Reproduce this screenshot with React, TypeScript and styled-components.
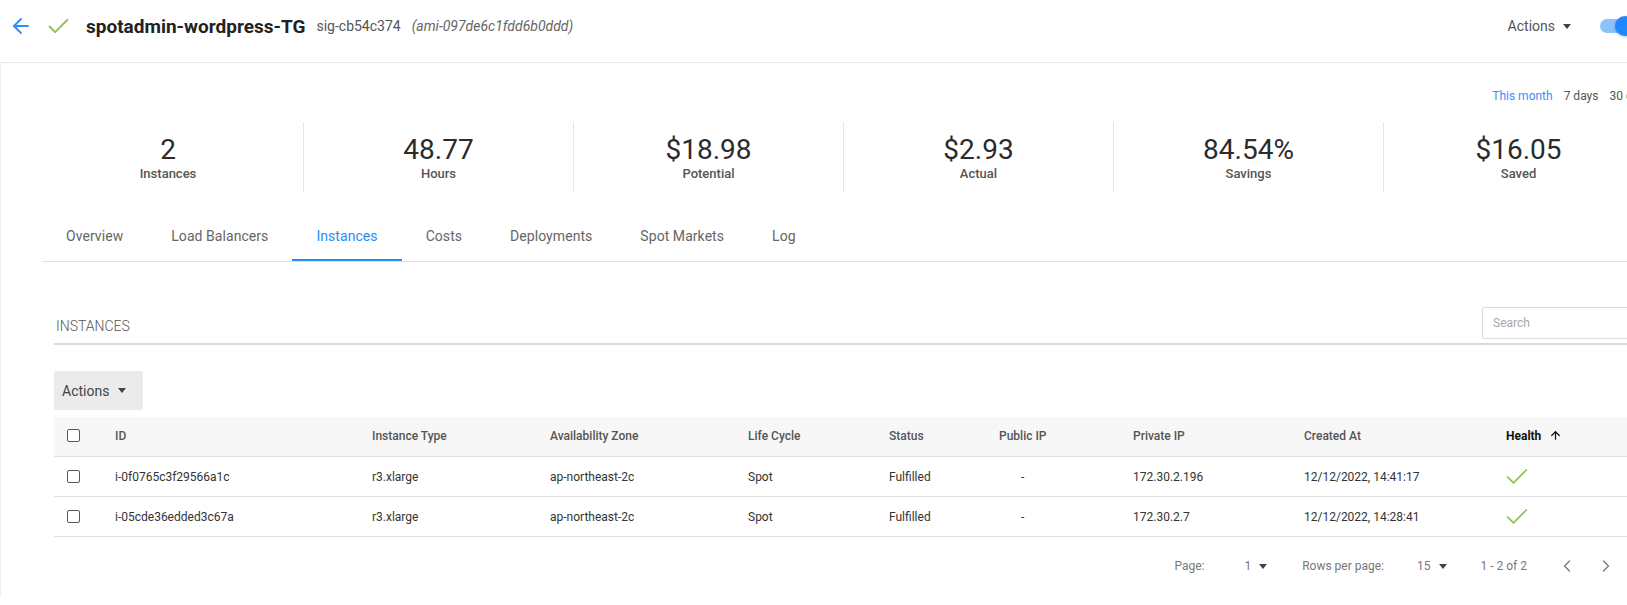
import React from 'react';
import styled, { createGlobalStyle } from 'styled-components';
import { ArrowLeft, ArrowUp, Check, ChevronLeft, ChevronRight } from 'lucide-react';

const GlobalStyle = createGlobalStyle`
  html, body {
    margin: 0;
    padding: 0;
    overflow: hidden;
    background: #fff;
  }
  body {
    font-family: Roboto, "Liberation Sans", Arial, sans-serif;
    color: #333;
  }
  * {
    box-sizing: border-box;
  }
`;

const Page = styled.div`
  width: 1700px;
`;

const Header = styled.header`
  display: flex;
  align-items: center;
  height: 63px;
  padding: 0 66px 10px 9px;
  border-bottom: 1px solid #e8e8e8;
`;

const BackButton = styled.span`
  display: flex;
  color: #2d8cff;
`;

const StatusIcon = styled.span`
  display: flex;
  margin-left: 12px;
  color: #8bc34a;
`;

const Title = styled.h1`
  margin: 0 0 0 14px;
  font-size: 19px;
  font-weight: 700;
  color: #222;
`;

const SubId = styled.span`
  margin-left: 11px;
  font-size: 14px;
  color: #555;
`;

const Ami = styled.span`
  margin-left: 11px;
  font-size: 14px;
  font-style: italic;
  color: #666;
`;

const HeaderRight = styled.div`
  margin-left: auto;
  display: flex;
  align-items: center;
`;

const MenuButton = styled.span`
  display: flex;
  align-items: center;
  font-size: 14px;
  color: #555;
`;

const Caret = styled.span<{ $gap?: number }>`
  display: inline-block;
  margin-left: ${(p) => p.$gap ?? 8}px;
  width: 0;
  height: 0;
  border-left: 4.5px solid transparent;
  border-right: 4.5px solid transparent;
  border-top: 5px solid #3d4451;
`;

const Toggle = styled.span`
  position: relative;
  display: inline-block;
  margin-left: 29px;
  width: 34px;
  height: 14px;
  border-radius: 7px;
  background: #8cc3fb;
`;

const ToggleThumb = styled.span`
  position: absolute;
  top: -3px;
  right: -1px;
  width: 20px;
  height: 20px;
  border-radius: 50%;
  background: #1e88ff;
  box-shadow: 0 1px 3px rgba(0, 0, 0, 0.25);
`;

const Body = styled.main`
  border-left: 1px solid #eeeeee;
`;

const RangeRow = styled.div`
  display: flex;
  justify-content: flex-end;
  gap: 11px;
  padding: 25px 49px 0 0;
  font-size: 12px;
  line-height: 16px;
`;

const RangeOption = styled.span<{ $active?: boolean }>`
  color: ${(p) => (p.$active ? '#3d8ef8' : '#555')};
`;

const StatsRow = styled.section`
  display: grid;
  grid-template-columns: repeat(6, 270px);
  margin: 18px 0 0 32px;
`;

const Stat = styled.div`
  display: flex;
  flex-direction: column;
  align-items: center;
  height: 70px;
  padding-top: 12px;
  & + & {
    border-left: 1px solid #e6e6e6;
  }
`;

const StatValue = styled.div`
  font-size: 28px;
  line-height: 32px;
  font-weight: 400;
  color: #2b2b2b;
`;

const StatLabel = styled.div`
  font-size: 13px;
  line-height: 16px;
  font-weight: 500;
  color: #555;
`;

const TabBar = styled.nav`
  display: flex;
  margin: 21px 0 0 41px;
  border-bottom: 1px solid #e0e0e0;
`;

const Tab = styled.span<{ $active?: boolean }>`
  display: flex;
  align-items: center;
  height: 48px;
  padding: 0 24px 1px;
  font-size: 14px;
  letter-spacing: 0.06px;
  color: ${(p) => (p.$active ? '#2b8cf8' : '#666')};
  border-bottom: 2px solid ${(p) => (p.$active ? '#2b8cf8' : 'transparent')};
`;

const Section = styled.section`
  margin: 41px 40px 0 53px;
`;

const SectionHeader = styled.div`
  display: flex;
  align-items: center;
  justify-content: space-between;
  padding: 4px 0;
  border-bottom: 2px solid #d9d9d9;
`;

const SectionTitle = styled.h2`
  margin: 0;
  padding: 5px 0 0 2px;
  font-size: 14px;
  font-weight: 300;
  color: #555;
  text-transform: uppercase;
`;

const SearchInput = styled.input`
  width: 178px;
  height: 32px;
  padding: 0 10px;
  border: 1px solid #dcdcdc;
  border-radius: 2px;
  font-family: Roboto, sans-serif;
  font-size: 12px;
  color: #333;
  &::placeholder {
    color: #a8a8a8;
  }
`;

const ActionsButton = styled.button`
  display: flex;
  align-items: center;
  margin-top: 26px;
  height: 39px;
  width: 89px;
  padding: 0 0 0 8px;
  border: none;
  border-radius: 2px;
  background: #ebebeb;
  font-family: Roboto, sans-serif;
  font-size: 14px;
  color: #444;
`;

const Table = styled.div`
  margin-top: 7px;
`;

const cols = '61px 257px 178px 198px 141px 110px 134px 171px 202px 1fr';

const HeadRow = styled.div`
  display: grid;
  grid-template-columns: ${cols};
  align-items: center;
  height: 40px;
  padding-bottom: 2px;
  background: #f7f7f7;
  border-bottom: 1px solid #e0e0e0;
  font-size: 12px;
  font-weight: 500;
  color: #555;
`;

const Row = styled.div`
  display: grid;
  grid-template-columns: ${cols};
  align-items: center;
  height: 40px;
  border-bottom: 1px solid #e0e0e0;
  font-size: 12px;
  color: #333;
`;

const Cell = styled.div<{ $indent?: number }>`
  padding-left: ${(p) => p.$indent ?? 0}px;
  display: flex;
  align-items: center;
`;

const SortHead = styled.div`
  display: flex;
  align-items: center;
  gap: 8px;
  font-weight: 700;
  color: #111;
`;

const Box = styled.span`
  display: inline-block;
  margin-left: 13px;
  width: 13px;
  height: 13px;
  border: 1.5px solid #5a5a5a;
  border-radius: 2px;
  background: #fff;
`;

const HealthIcon = styled.span`
  display: flex;
  margin-left: -3px;
  color: #8bc34a;
`;

const Pagination = styled.div`
  display: flex;
  align-items: center;
  justify-content: flex-end;
  height: 58px;
  padding-right: 44px;
  font-size: 12px;
  color: #777;
`;

const PagerItem = styled.span<{ $gap: number }>`
  display: flex;
  align-items: center;
  margin-left: ${(p) => p.$gap}px;
`;

const PagerArrow = styled.span<{ $gap: number }>`
  display: flex;
  margin-left: ${(p) => p.$gap}px;
  color: #777;
`;

const stats = [
  { value: '2', label: 'Instances' },
  { value: '48.77', label: 'Hours' },
  { value: '$18.98', label: 'Potential' },
  { value: '$2.93', label: 'Actual' },
  { value: '84.54%', label: 'Savings' },
  { value: '$16.05', label: 'Saved' },
];

const tabs = ['Overview', 'Load Balancers', 'Instances', 'Costs', 'Deployments', 'Spot Markets', 'Log'];

const instances = [
  {
    id: 'i-0f0765c3f29566a1c',
    type: 'r3.xlarge',
    zone: 'ap-northeast-2c',
    lifeCycle: 'Spot',
    status: 'Fulfilled',
    publicIp: '-',
    privateIp: '172.30.2.196',
    createdAt: '12/12/2022, 14:41:17',
  },
  {
    id: 'i-05cde36edded3c67a',
    type: 'r3.xlarge',
    zone: 'ap-northeast-2c',
    lifeCycle: 'Spot',
    status: 'Fulfilled',
    publicIp: '-',
    privateIp: '172.30.2.7',
    createdAt: '12/12/2022, 14:28:41',
  },
];

const App: React.FC = () => {
  return (
    <Page>
      <GlobalStyle />
      <Header>
        <BackButton>
          <ArrowLeft size={24} strokeWidth={1.8} />
        </BackButton>
        <StatusIcon>
          <Check size={27} strokeWidth={1.6} />
        </StatusIcon>
        <Title>spotadmin-wordpress-TG</Title>
        <SubId>sig-cb54c374</SubId>
        <Ami>(ami-097de6c1fdd6b0ddd)</Ami>
        <HeaderRight>
          <MenuButton>
            Actions
            <Caret />
          </MenuButton>
          <Toggle>
            <ToggleThumb />
          </Toggle>
        </HeaderRight>
      </Header>

      <Body>
        <RangeRow>
          <RangeOption $active>This month</RangeOption>
          <RangeOption>7 days</RangeOption>
          <RangeOption>30 days</RangeOption>
        </RangeRow>

        <StatsRow>
          {stats.map((s) => (
            <Stat key={s.label}>
              <StatValue>{s.value}</StatValue>
              <StatLabel>{s.label}</StatLabel>
            </Stat>
          ))}
        </StatsRow>

        <TabBar>
          {tabs.map((t) => (
            <Tab key={t} $active={t === 'Instances'}>
              {t}
            </Tab>
          ))}
        </TabBar>

        <Section>
          <SectionHeader>
            <SectionTitle>Instances</SectionTitle>
            <SearchInput placeholder="Search" />
          </SectionHeader>

          <ActionsButton>
            Actions
            <Caret $gap={9} />
          </ActionsButton>

          <Table>
            <HeadRow>
              <Cell>
                <Box />
              </Cell>
              <Cell>ID</Cell>
              <Cell>Instance Type</Cell>
              <Cell>Availability Zone</Cell>
              <Cell>Life Cycle</Cell>
              <Cell>Status</Cell>
              <Cell>Public IP</Cell>
              <Cell>Private IP</Cell>
              <Cell>Created At</Cell>
              <SortHead>
                Health
                <ArrowUp size={13} strokeWidth={2.2} />
              </SortHead>
            </HeadRow>
            {instances.map((row) => (
              <Row key={row.id}>
                <Cell>
                  <Box />
                </Cell>
                <Cell>{row.id}</Cell>
                <Cell>{row.type}</Cell>
                <Cell>{row.zone}</Cell>
                <Cell>{row.lifeCycle}</Cell>
                <Cell>{row.status}</Cell>
                <Cell $indent={22}>{row.publicIp}</Cell>
                <Cell>{row.privateIp}</Cell>
                <Cell>{row.createdAt}</Cell>
                <Cell>
                  <HealthIcon>
                    <Check size={28} strokeWidth={1.5} />
                  </HealthIcon>
                </Cell>
              </Row>
            ))}
          </Table>

          <Pagination>
            <PagerItem $gap={0}>Page:</PagerItem>
            <PagerItem $gap={40}>
              1<Caret $gap={8} />
            </PagerItem>
            <PagerItem $gap={35}>Rows per page:</PagerItem>
            <PagerItem $gap={33}>
              15<Caret $gap={8} />
            </PagerItem>
            <PagerItem $gap={34}>1 - 2 of 2</PagerItem>
            <PagerArrow $gap={30}>
              <ChevronLeft size={20} strokeWidth={1.5} />
            </PagerArrow>
            <PagerArrow $gap={19}>
              <ChevronRight size={20} strokeWidth={1.5} />
            </PagerArrow>
          </Pagination>
        </Section>
      </Body>
    </Page>
  );
};

export default App;
